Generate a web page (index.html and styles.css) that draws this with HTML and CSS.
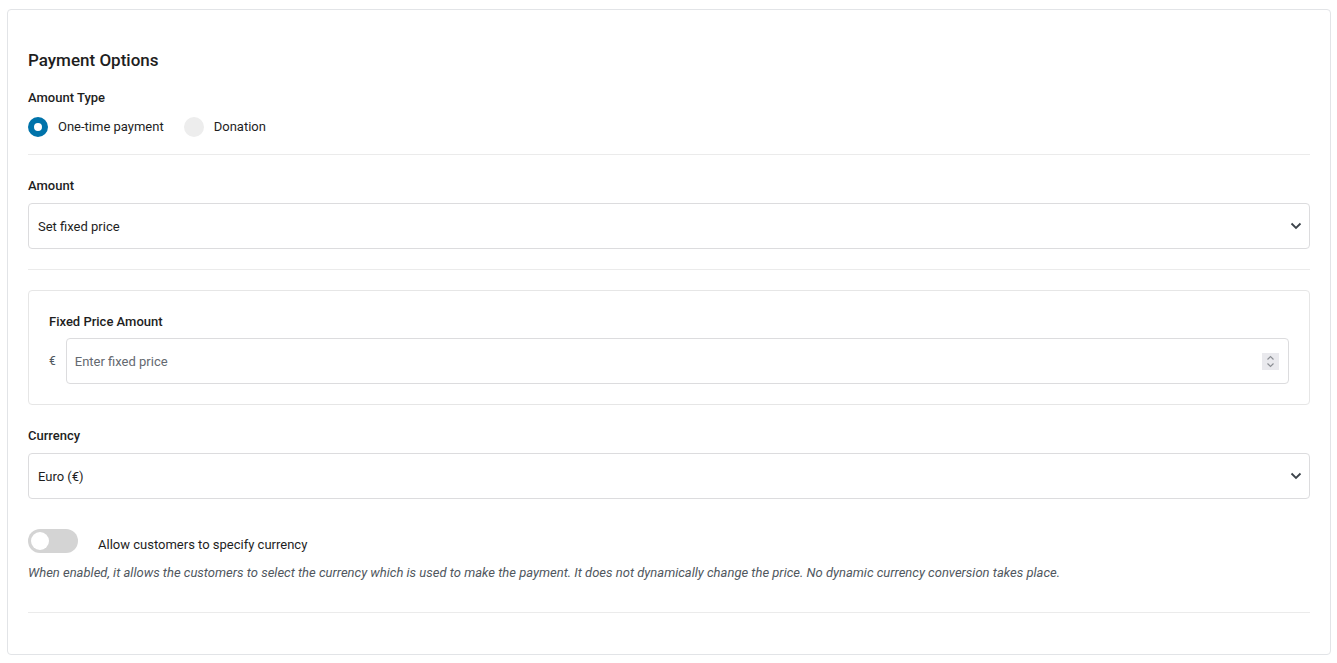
FILE: index.html
```html
<!DOCTYPE html>
<html lang="en">

<head>
    <meta charset="UTF-8">
    <meta name="viewport" content="width=device-width, initial-scale=1.0">
    <title>Payment Options</title>
    <link rel="stylesheet" href="styles.css">
</head>

<body>
    <div class="panel">
        <h2 class="panel-title">Payment Options</h2>

        <div class="field">
            <div class="field-label">Amount Type</div>
            <div class="radio-row">
                <label class="radio">
                    <span class="radio-dot checked"></span>
                    <span>One-time payment</span>
                </label>
                <label class="radio">
                    <span class="radio-dot"></span>
                    <span>Donation</span>
                </label>
            </div>
        </div>

        <hr class="divider first">

        <div class="field">
            <div class="field-label">Amount</div>
            <div class="select">
                <span>Set fixed price</span>
                <svg class="chevron" width="12" height="8" viewBox="0 0 12 8">
                    <polyline points="1.5,1.5 6,6 10.5,1.5" fill="none" stroke="#3c434a" stroke-width="1.8" />
                </svg>
            </div>
        </div>

        <hr class="divider">

        <div class="subcard">
            <div class="field-label sub">Fixed Price Amount</div>
            <div class="price-row">
                <span class="currency-sign">€</span>
                <div class="input">
                    <span class="placeholder">Enter fixed price</span>
                    <span class="spinner">
                        <svg width="17" height="17" viewBox="0 0 17 17">
                            <polyline points="5.5,6.5 8.5,3.5 11.5,6.5" fill="none" stroke="#8c8f94" stroke-width="1.2" />
                            <polyline points="5.5,10.5 8.5,13.5 11.5,10.5" fill="none" stroke="#8c8f94" stroke-width="1.2" />
                        </svg>
                    </span>
                </div>
            </div>
        </div>

        <div class="field currency">
            <div class="field-label">Currency</div>
            <div class="select">
                <span>Euro (€)</span>
                <svg class="chevron" width="12" height="8" viewBox="0 0 12 8">
                    <polyline points="1.5,1.5 6,6 10.5,1.5" fill="none" stroke="#3c434a" stroke-width="1.8" />
                </svg>
            </div>
        </div>

        <div class="toggle-row">
            <span class="toggle"><span class="knob"></span></span>
            <span class="toggle-text">Allow customers to specify currency</span>
        </div>
        <p class="help">When enabled, it allows the customers to select the currency which is used to make the payment. It does not dynamically change the price. No dynamic currency conversion takes place.</p>

        <hr class="divider last">
    </div>
</body>

</html>
```

FILE: styles.css
```css
body {
    margin: 0;
    background: #fff;
    font-family: Roboto, "Noto Sans", sans-serif;
    font-size: 13px;
    color: #1e1e1e;
}

.panel {
    margin: 9px 6px 0 7px;
    padding: 38px 20px 41px;
    border: 1px solid #e2e4e7;
    border-radius: 4px;
}

.panel-title {
    margin: 0 0 17px;
    font-size: 17px;
    line-height: 24px;
    font-weight: 500;
}

.field-label {
    font-weight: 500;
    line-height: 18px;
    margin-bottom: 10px;
}

.divider {
    margin: 20px 0;
    border: 0;
    border-top: 1px solid #ebebeb;
}

.divider.first {
    margin: 17px 0 22px;
}

/* radios */
.radio-row {
    display: flex;
    gap: 20px;
}

.radio {
    display: flex;
    align-items: center;
    gap: 10px;
    line-height: 20px;
}

.radio-dot {
    width: 20px;
    height: 20px;
    border-radius: 50%;
    background: #ededed;
    box-sizing: border-box;
}

.radio-dot.checked {
    background: #fff;
    border: 6px solid #0073aa;
}

/* select */
.select {
    display: flex;
    align-items: center;
    justify-content: space-between;
    height: 46px;
    margin-top: -2px;
    box-sizing: border-box;
    padding: 0 7px 0 9px;
    border: 1px solid #dcdcde;
    border-radius: 4px;
}

/* fixed price box */
.subcard {
    padding: 21px 20px 20px;
    border: 1px solid #e6e6e6;
    border-radius: 4px;
}

.field-label.sub {
    line-height: 20px;
    margin-bottom: 6px;
}

.price-row {
    display: flex;
    align-items: center;
    gap: 10px;
}

.currency-sign {
    color: #50575e;
    font-size: 12px;
}

.input {
    flex: 1;
    display: flex;
    align-items: center;
    justify-content: space-between;
    height: 46px;
    box-sizing: border-box;
    padding: 0 9px 0 8px;
    border: 1px solid #dcdcde;
    border-radius: 4px;
}

.placeholder {
    color: #646970;
}

.spinner {
    display: flex;
    background: #e9e9ed;
}

.currency {
    margin-top: 22px;
}

/* toggle */
.toggle-row {
    display: flex;
    align-items: center;
    gap: 20px;
    margin-top: 30px;
}

.toggle {
    position: relative;
    width: 50px;
    height: 24px;
    border-radius: 12px;
    background: #d4d4d4;
}

.toggle .knob {
    position: absolute;
    left: 3px;
    top: 3px;
    width: 18px;
    height: 18px;
    border-radius: 50%;
    background: #fff;
}

.toggle-text {
    margin-top: 6px;
}

.help {
    margin: 11px 0 0;
    font-size: 13px;
    font-style: italic;
    line-height: 18px;
    color: #50575e;
}

.divider.last {
    margin: 30px 0 0;
}
```
